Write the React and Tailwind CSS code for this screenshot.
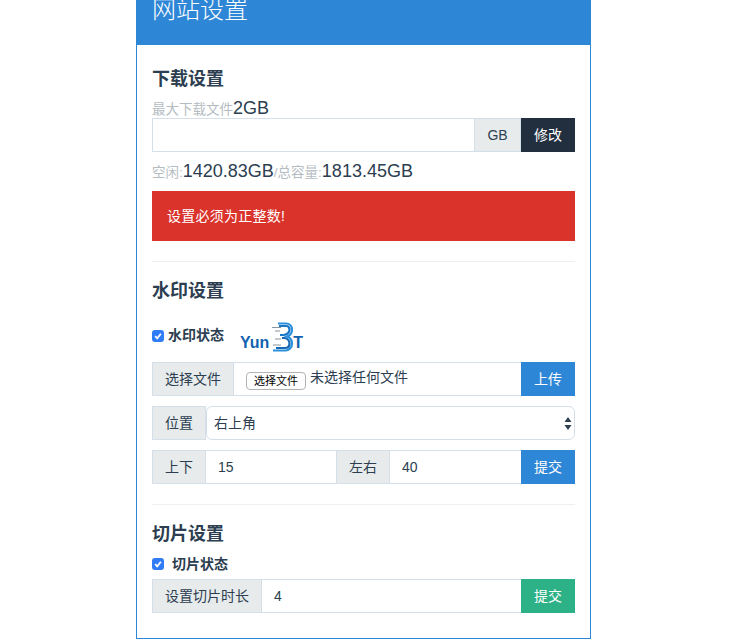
const cjk = "font-['Helvetica_Neue','Liberation_Sans','Noto_Sans_CJK_SC',sans-serif]";

function Addon({ className = "", children }) {
  return (
    <span className={`flex h-[34px] shrink-0 items-center justify-center border border-[#d5dfe9] bg-[#e7ebec] text-sm text-[#2c3e50] ${className}`}>
      {children}
    </span>
  );
}

function Btn({ color, children }) {
  return (
    <button className={`h-[34px] w-[54px] shrink-0 text-sm text-white ${color}`}>{children}</button>
  );
}

function Check({ className = "" }) {
  return (
    <span className={`flex h-3 w-3 shrink-0 items-center justify-center rounded-[3px] bg-[#2f7cf6] ${className}`}>
      <svg viewBox="0 0 12 12" className="h-3 w-3" fill="none" stroke="#fff" strokeWidth="1.8">
        <path d="M3.2 6.2 5.2 8.3 8.9 3.8" />
      </svg>
    </span>
  );
}

function Heading({ children }) {
  return <h4 className="text-lg leading-5 font-bold text-[#2c3e50]">{children}</h4>;
}

function Logo() {
  return (
    <div className="relative h-[30px] w-[63px] font-['Liberation_Sans',sans-serif] text-base leading-[18px] font-bold text-[#1262ae]">
      <span className="absolute bottom-0 left-0">Yun</span>
      <svg viewBox="0 0 24 30" className="absolute top-0 left-[31px] h-[30px] w-[24px]" fill="none">
        <path d="M7 1.500h8c3.500 0 6 2.500 6 6 0 3.500-2 6-5 7 3 1 5 3.500 5 7 0 4-3 7-6.500 7H2" stroke="#2a8fdc" strokeWidth="2.200" />
        <path d="M8 4h7c2.500 0 3.500 1.500 3.500 3.500 0 2.500-2 4.800-5.500 5.500H9" stroke="#1a78c8" strokeWidth="2.200" />
        <path d="M11 16h2.500c3 .5 5 3 5 5.500 0 2.500-1.500 4.500-4.500 4.500H5" stroke="#1568b4" strokeWidth="2.200" />
        <path d="M1 5.500h9M4 9h5M4 17h6M2 23h8" stroke="#8a949c" strokeWidth="1.200" />
      </svg>
      <span className="absolute right-0 bottom-0">T</span>
    </div>
  );
}

export default function App() {
  return (
    <div className={`min-h-[644px] bg-white ${cjk}`}>
      <div className="ml-[136px] w-[455px] border border-t-0 border-[#2e86d6] pb-[25px]">
        <div className="h-[45px] bg-[#2e86d6] pl-[15px] text-2xl leading-[20px] font-light text-white">网站设置</div>

        <div className="px-[15px] pt-[24px]">
          <Heading>下载设置</Heading>
          <p className="mt-[5px] h-[20px] text-[13.5px] leading-[20px] text-[#b4bcc2]">
            最大下载文件<span className="text-lg text-[#2c3e50]">2GB</span>
          </p>
          <div className="mt-[4px] flex">
            <input className="h-[34px] min-w-0 flex-1 border border-[#d5dfe9] bg-white" />
            <Addon className="w-[46px] border-l-0">GB</Addon>
            <Btn color="bg-[#212f3f]">修改</Btn>
          </div>
          <p className="mt-[5px] h-[20px] text-[13.5px] leading-[20px] text-[#b4bcc2]">
            空闲:<span className="text-lg text-[#2c3e50]">1420.83GB</span>/总容量:<span className="text-lg text-[#2c3e50]">1813.45GB</span>
          </p>
          <div className="mt-[14px] flex h-[50px] items-center bg-[#d9332c] pl-[15px] text-sm tracking-[0.25px] text-white">设置必须为正整数!</div>

          <hr className="mt-[20px] border-t border-[#ecf0f1]" />

          <div className="mt-[19px]"><Heading>水印设置</Heading></div>
          <div className="mt-[21px] flex h-[30px] items-start">
            <Check className="mt-[8px]" />
            <span className="ml-1 w-[72px] text-sm leading-5 font-bold text-[#2c3e50] mt-[3px]">水印状态</span>
            <Logo />
          </div>
          <div className="mt-[10px] flex">
            <Addon className="w-[82px]">选择文件</Addon>
            <div className="flex h-[34px] min-w-0 flex-1 items-start border-y border-[#d5dfe9] pl-3 text-sm leading-[24px] text-[#2c3e50]">
              <span className="mt-[9px] flex h-[18px] w-[60px] items-center justify-center rounded-[4px] border border-[#b3b3b3] bg-white text-[11px] text-black">选择文件</span>
              <span className="mt-[2px] ml-[4px]">未选择任何文件</span>
            </div>
            <Btn color="bg-[#2e86d6]">上传</Btn>
          </div>
          <div className="mt-[10px] flex">
            <Addon className="w-[54px]">位置</Addon>
            <div className="relative min-w-0 flex-1">
              <select className="h-[34px] w-full appearance-none rounded-[6px] border border-[#d5dfe9] bg-white pl-[7px] text-sm text-[#2c3e50]">
                <option>右上角</option>
              </select>
              <svg viewBox="0 0 8 13" className="pointer-events-none absolute top-[11px] right-[3px] h-[13px] w-2" fill="#2c3e50">
                <path d="M4 0 7.500 5H.5zM4 13 .5 8h7z" />
              </svg>
            </div>
          </div>
          <div className="mt-[10px] flex">
            <Addon className="w-[54px]">上下</Addon>
            <input readOnly value="15" className="h-[34px] w-[130px] min-w-0 border-y border-[#d5dfe9] bg-white pl-3 text-sm text-[#2c3e50]" />
            <Addon className="w-[54px]">左右</Addon>
            <input readOnly value="40" className="h-[34px] min-w-0 flex-1 border-y border-[#d5dfe9] bg-white pl-3 text-sm text-[#2c3e50]" />
            <Btn color="bg-[#2e86d6]">提交</Btn>
          </div>

          <hr className="mt-[20px] border-t border-[#ecf0f1]" />

          <div className="mt-[19px]"><Heading>切片设置</Heading></div>
          <div className="mt-[10px] flex h-[20px] items-center">
            <Check />
            <span className="ml-[8px] text-sm font-bold text-[#2c3e50]">切片状态</span>
          </div>
          <div className="mt-[5px] flex">
            <Addon className="w-[110px]">设置切片时长</Addon>
            <input readOnly value="4" className="h-[34px] min-w-0 flex-1 border-y border-[#d5dfe9] bg-white pl-3 text-sm text-[#2c3e50]" />
            <Btn color="bg-[#2db288]">提交</Btn>
          </div>
        </div>
      </div>
    </div>
  );
}
